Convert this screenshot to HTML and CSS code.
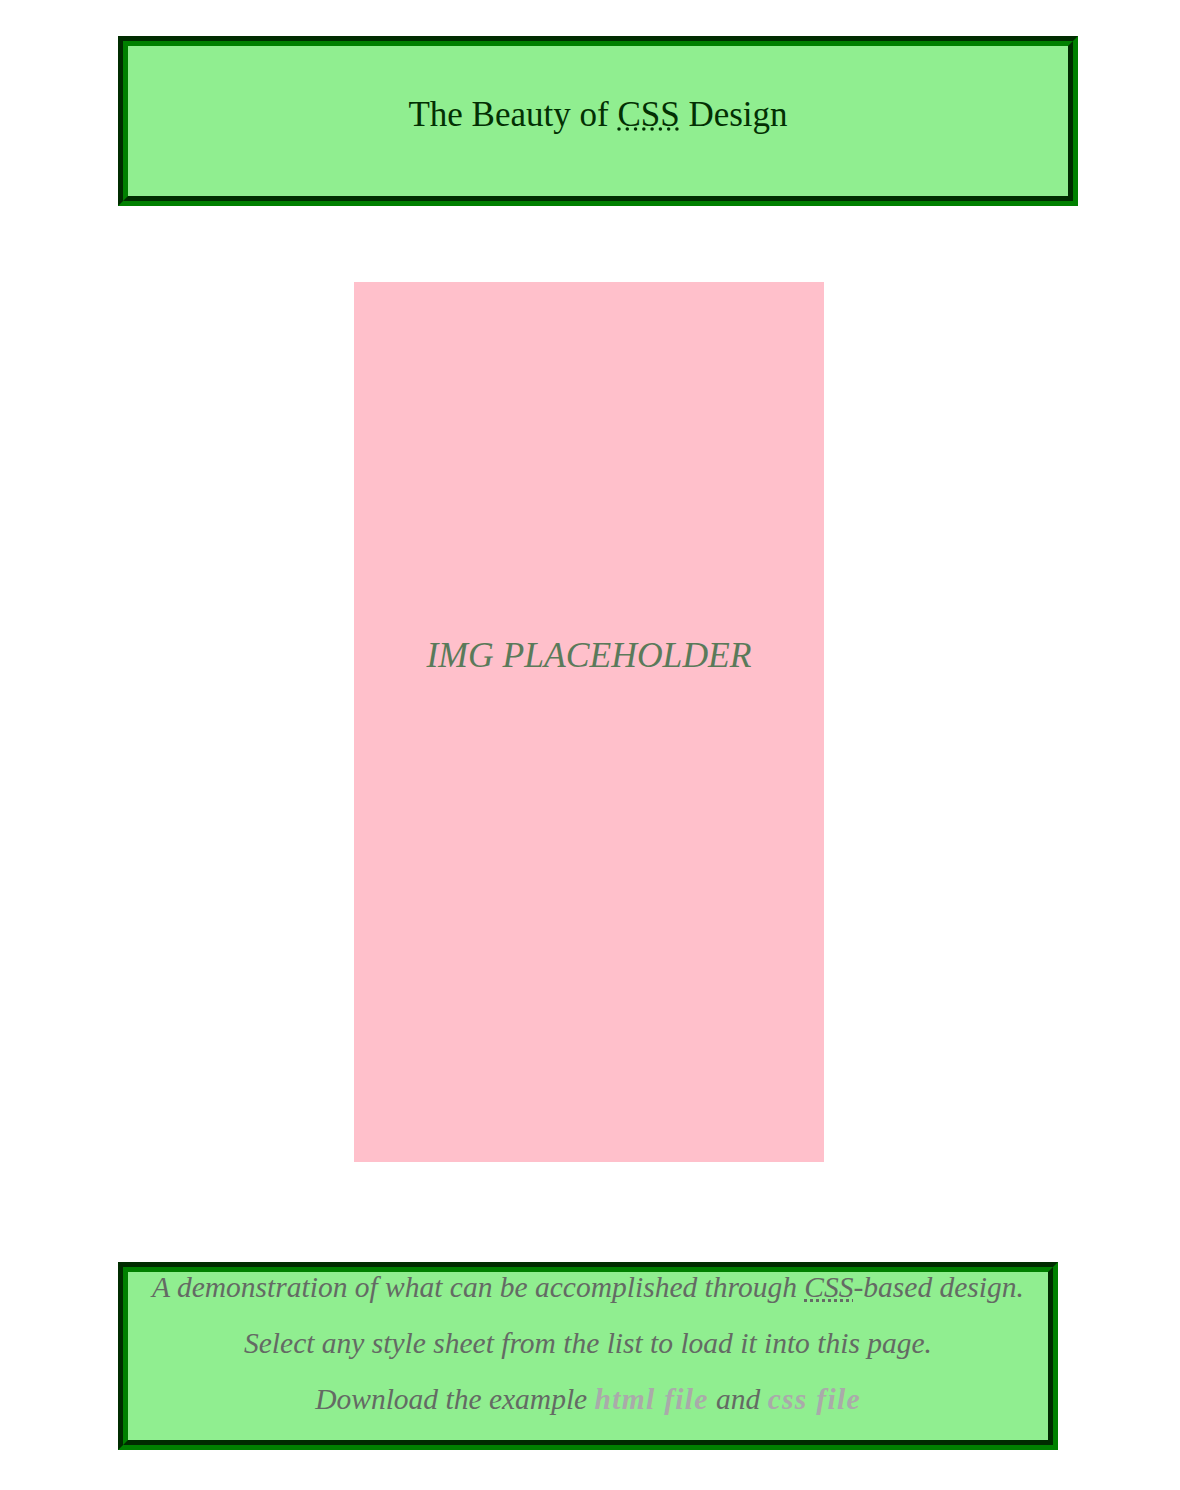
FILE: index.html
```html
<!DOCTYPE html>
<html lang="en">
<head>
    <meta charset="UTF-8">
    <meta name="viewport" content="width=device-width, initial-scale=1.0">
    <title>The Beauty of CSS Design</title>
    <link rel="stylesheet" href="styles.css">
</head>
<body>
    <header class="page-header">
        <h1>The Beauty of <abbr title="Cascading Style Sheets">CSS</abbr> Design</h1>
    </header>

    <div class="img-placeholder">
        <span>IMG PLACEHOLDER</span>
    </div>

    <footer class="page-footer">
        <p>A demonstration of what can be accomplished through <abbr title="Cascading Style Sheets">CSS</abbr>-based design.</p>
        <p>Select any style sheet from the list to load it into this page.</p>
        <p>Download the example <a href="#" title="This page's source HTML code, not to be modified.">html file</a> and <a href="#" title="This page's sample CSS, the file you may modify.">css file</a></p>
    </footer>
</body>
</html>
```

FILE: styles.css
```css
* {
    box-sizing: border-box;
}

body {
    margin: 0;
    background: #fff;
    font-family: "Liberation Serif", "Times New Roman", serif;
}

.page-header {
    width: 960px;
    margin: 36px 0 0 118px;
    padding: 49px 0 61px;
    background: #90ee90;
    border: 10px groove green;
    text-align: center;
}

.page-header h1 {
    margin: 0;
    font-size: 35px;
    font-weight: normal;
    line-height: 40px;
    color: #033003;
}

.img-placeholder {
    width: 470px;
    height: 880px;
    margin: 76px 0 0 354px;
    padding-top: 352px;
    background: pink;
    text-align: center;
    font-size: 35.6px;
    font-style: italic;
    color: #5a7a5a;
}

.page-footer {
    display: flex;
    flex-direction: column;
    gap: 26px;
    width: 940px;
    margin: 100px 0 0 118px;
    padding: 0 0 26px;
    background: #90ee90;
    border: 10px groove green;
    text-align: center;
    font-size: 29.5px;
    font-style: italic;
    line-height: 30px;
    color: #646a64;
}

.page-footer p {
    margin: 0;
}

.page-footer a {
    color: #aaa;
    font-weight: bold;
    letter-spacing: 1.3px;
    text-decoration: none;
}
```
